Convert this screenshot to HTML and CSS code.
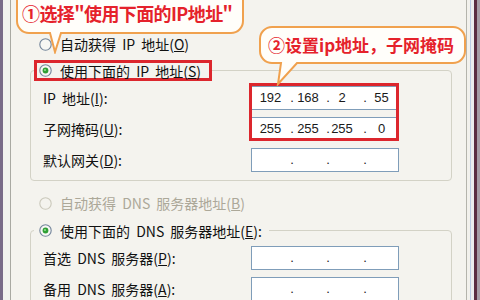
FILE: index.html
```html
<!DOCTYPE html>
<html lang="zh-CN">
<head>
<meta charset="utf-8">
<title>TCP/IP 属性</title>
<link rel="stylesheet" href="styles.css">
</head>
<body>
<div class="window">
  <div class="frame-left"></div>
  <div class="panel">
    <div class="radio-row">
      <svg class="radio" viewBox="0 0 13 13"><circle cx="6.5" cy="6.5" r="5.7" fill="#f7f7f4" stroke="#72849a" stroke-width="1.1"/></svg>
      <span>自动获得 IP 地址(<u>O</u>)</span>
    </div>
    <div class="group group-ip">
      <div class="group-title marked">
        <svg class="radio" viewBox="0 0 13 13"><circle cx="6.5" cy="6.5" r="5.7" fill="#f7f7f4" stroke="#72849a" stroke-width="1.1"/><circle cx="6.5" cy="6.5" r="2.9" fill="#2f9f34"/><circle cx="6" cy="6" r="1.1" fill="#8fdc8f"/></svg>
        <span>使用下面的 IP 地址(<u>S</u>)</span>
      </div>
      <div class="fields fields-3">
        <div class="field-label row-1">IP 地址(<u>I</u>):</div>
        <div class="ip-box row-1"><span class="seg">192</span><span class="dot">.</span><span class="seg s2">168</span><span class="dot">.</span><span class="seg s3">2</span><span class="dot">.</span><span class="seg s4">55</span></div>
        <div class="field-label row-2">子网掩码(<u>U</u>):</div>
        <div class="ip-box row-2"><span class="seg">255</span><span class="dot">.</span><span class="seg s2">255</span><span class="dot">.</span><span class="seg s3">255</span><span class="dot">.</span><span class="seg s4">0</span></div>
        <div class="ip-highlight"></div>
        <div class="field-label row-3">默认网关(<u>D</u>):</div>
        <div class="ip-box row-3"><span class="seg"></span><span class="dot">.</span><span class="seg s2"></span><span class="dot">.</span><span class="seg s3"></span><span class="dot">.</span><span class="seg s4"></span></div>
      </div>
    </div>
    <div class="radio-row disabled">
      <svg class="radio" viewBox="0 0 13 13"><circle cx="6.5" cy="6.5" r="5.7" fill="#f4f3ee" stroke="#cac8bb" stroke-width="1.1"/></svg>
      <span>自动获得 DNS 服务器地址(<u>B</u>)</span>
    </div>
    <div class="group group-dns">
      <div class="group-title">
        <svg class="radio" viewBox="0 0 13 13"><circle cx="6.5" cy="6.5" r="5.7" fill="#f7f7f4" stroke="#72849a" stroke-width="1.1"/><circle cx="6.5" cy="6.5" r="2.9" fill="#2f9f34"/><circle cx="6" cy="6" r="1.1" fill="#8fdc8f"/></svg>
        <span>使用下面的 DNS 服务器地址(<u>E</u>):</span>
      </div>
      <div class="fields fields-2">
        <div class="field-label row-1">首选 DNS 服务器(<u>P</u>):</div>
        <div class="ip-box row-1"><span class="seg"></span><span class="dot">.</span><span class="seg s2"></span><span class="dot">.</span><span class="seg s3"></span><span class="dot">.</span><span class="seg s4"></span></div>
        <div class="field-label row-2">备用 DNS 服务器(<u>A</u>):</div>
        <div class="ip-box row-2"><span class="seg"></span><span class="dot">.</span><span class="seg s2"></span><span class="dot">.</span><span class="seg s3"></span><span class="dot">.</span><span class="seg s4"></span></div>
      </div>
    </div>
  </div>
  <div class="frame-right"></div>

  <div class="callout callout-1">
    <svg class="callout-shape" width="232" height="68" viewBox="0 0 232 68"><path d="M14,2 H216 A12,12 0 0 1 228,14 V35 A12,12 0 0 1 216,47 H46 L40,66 L35,47 H14 A12,12 0 0 1 2,35 V14 A12,12 0 0 1 14,2 Z" fill="#fffefa" stroke="#f0a14e" stroke-width="2"/></svg>
    <span class="callout-text">①选择"使用下面的IP地址"</span>
  </div>
  <div class="callout callout-2">
    <svg class="callout-shape" width="209" height="61" viewBox="0 0 209 61"><path d="M14,2 H195 A12,12 0 0 1 207,14 V26 A12,12 0 0 1 195,38 H39 L20,59 L23,38 H14 A12,12 0 0 1 2,26 V14 A12,12 0 0 1 14,2 Z" fill="#fffefa" stroke="#f0a14e" stroke-width="2"/></svg>
    <span class="callout-text">②设置ip地址，子网掩码</span>
  </div>
</div>
</body>
</html>
```

FILE: styles.css
```css
* {
  box-sizing: border-box;
}

html,
body {
  margin: 0;
  padding: 0;
}

body {
  width: 480px;
  height: 300px;
  overflow: hidden;
  background: #f4f3ee;
  font-family: "Noto Sans CJK SC", "Noto Sans", sans-serif;
  font-size: 14px;
  color: #111;
}

.window {
  position: relative;
  display: flex;
  width: 480px;
  height: 300px;
}

.frame-left {
  flex: 0 0 11px;
  background: linear-gradient(to right, #7a6b87 0 3px, #f3f2ed 3px 10px, #a9a9a2 10px 11px);
}

.panel {
  flex: 0 0 455px;
  background: #f4f3ee;
  padding-top: 34px;
}

.frame-right {
  flex: 0 0 14px;
  background: linear-gradient(to right, #b4b4ac 0 1px, #f2f1ec 1px 4px, #bccbe6 4px 5px, #ecebef 5px 8px, #5b2b42 8px 11px, #a59aa6 11px 14px);
}

.radio {
  display: block;
  flex: none;
  width: 13px;
  height: 13px;
}

.radio-row {
  display: flex;
  align-items: center;
  gap: 8px;
  height: 20px;
  margin-left: 28px;
  line-height: 16px;
  word-spacing: 3px;
  white-space: nowrap;
}

.radio-row.disabled {
  margin-top: 12px;
  color: #aca899;
}

.group {
  margin-left: 19px;
  width: 422px;
  border: 1px solid #d3d2c6;
  border-radius: 4px;
  padding-bottom: 8px;
}

.group-ip {
  margin-top: 16px;
}

.group-dns {
  margin-top: 17px;
}

.group-title {
  display: flex;
  align-items: center;
  gap: 8px;
  width: fit-content;
  height: 21px;
  margin: -11px 0 0 3px;
  padding: 0 4px 0 2px;
  border: 3px solid transparent;
  background: #f4f3ee;
  line-height: 16px;
  word-spacing: 3px;
  white-space: nowrap;
}

.group-title.marked {
  width: 178px;
  border-color: #dc262d;
}

.fields {
  display: grid;
  grid-template-columns: 208px 148px;
  row-gap: 7px;
  margin-top: 5px;
  padding-left: 12px;
}

.fields-3 {
  grid-template-rows: repeat(3, 24px);
}

.fields-2 {
  grid-template-rows: repeat(2, 24px);
}

.row-1 {
  grid-row: 1;
}

.row-2 {
  grid-row: 2;
}

.row-3 {
  grid-row: 3;
}

.field-label {
  grid-column: 1;
  align-self: center;
  line-height: 16px;
  word-spacing: 3px;
  white-space: nowrap;
}

.ip-box {
  grid-column: 2;
  display: grid;
  grid-template-columns: 37px 6px 30px 6px 31px 6px 1fr;
  align-items: center;
  height: 24px;
  border: 1px solid #7f9db9;
  background: #fff;
  padding-bottom: 2px;
  font-family: "Liberation Sans", Arial, sans-serif;
  font-size: 13px;
  line-height: 15px;
  color: #1a1a1a;
}

.seg {
  text-align: center;
}

.s2 {
  padding-right: 4px;
}

.s3 {
  padding-right: 9px;
}

.s4 {
  padding-right: 3px;
}

.dot {
  text-align: center;
}

.ip-highlight {
  grid-column: 2;
  grid-row: 1 / 3;
  margin: -3px 0 0 -2px;
  border: 3px solid #dc262d;
  z-index: 1;
}

.callout {
  position: absolute;
  z-index: 2;
}

.callout-shape {
  position: absolute;
  left: 0;
  top: 0;
}

.callout-text {
  position: relative;
  display: block;
  color: #e5222b;
  font-weight: 700;
  line-height: 20px;
  white-space: nowrap;
}

.callout-1 {
  left: 15px;
  top: -14px;
  width: 232px;
  height: 68px;
}

.callout-1 .callout-text {
  padding: 17px 0 0 7px;
  font-size: 18px;
  letter-spacing: -0.6px;
}

.callout-2 {
  left: 258px;
  top: 25px;
  width: 209px;
  height: 61px;
}

.callout-2 .callout-text {
  padding: 10px 0 0 10px;
  font-size: 17px;
}
```
